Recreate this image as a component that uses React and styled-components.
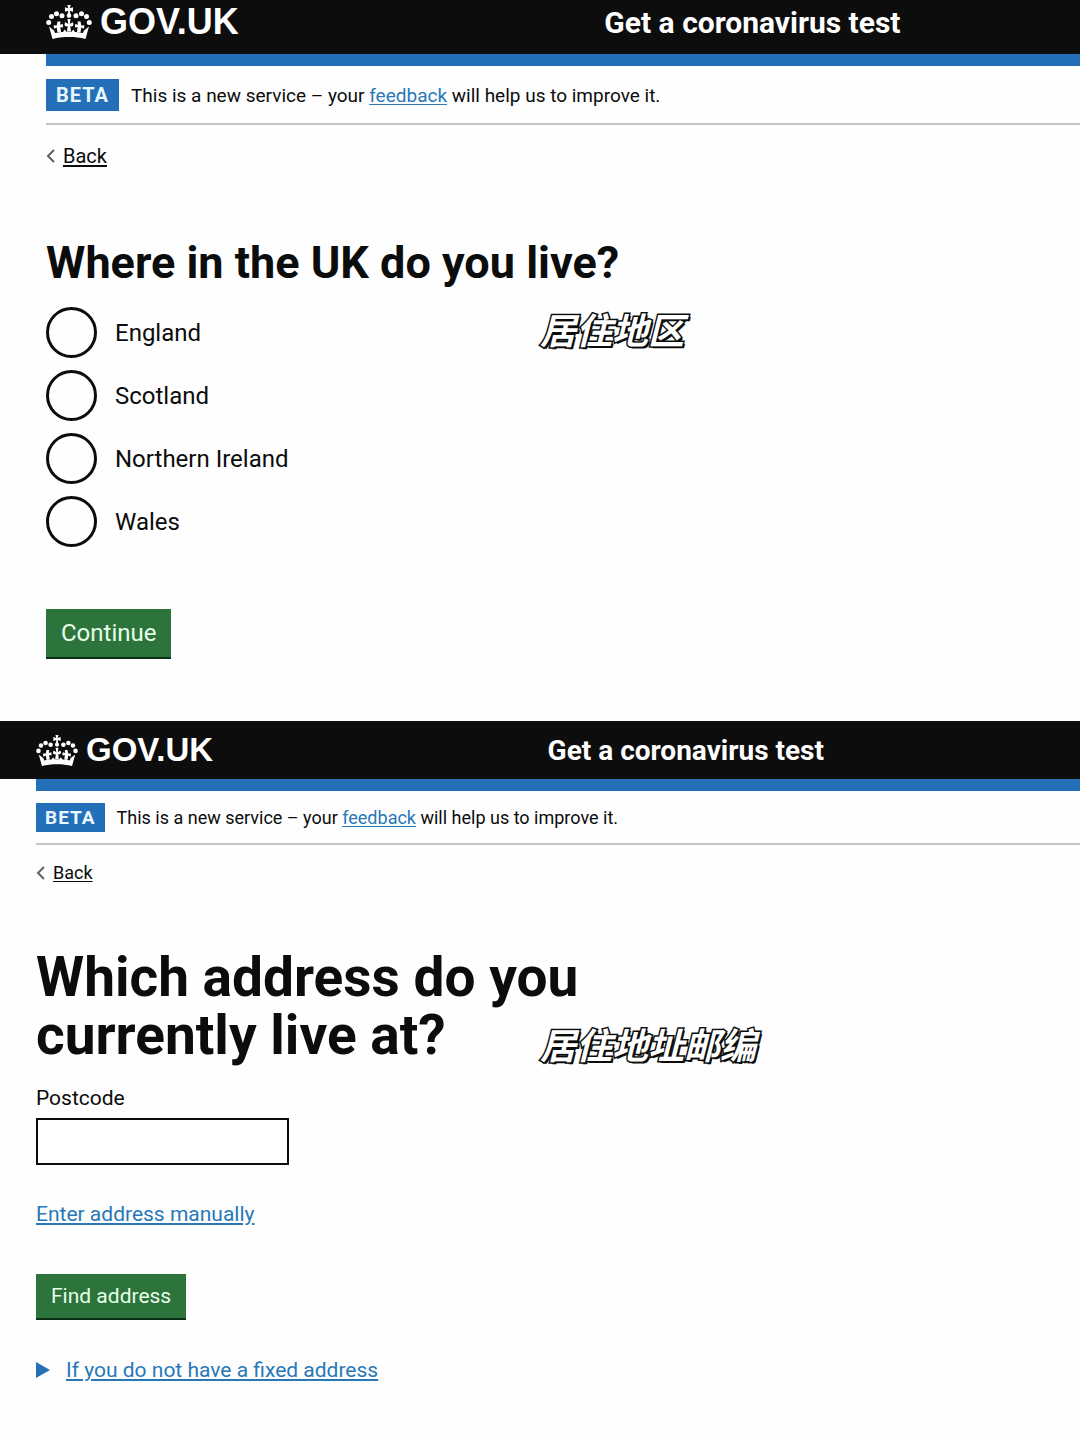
import styled, { createGlobalStyle, ThemeProvider } from "styled-components";

const regionSizes = {
  gutter: 46,
  headerHeight: 54,
  headerPad: 10,
  bar: 12,
  logo: 36,
  crown: 46,
  logoColumn: "54%",
  service: 30,
  small: 19,
  back: 20,
  body: 24,
  heading: 45,
  headingLine: 50,
  headingGap: 19,
  tag: 20,
  tagHeight: 32,
  tagPad: 10,
  bannerPad: "13px 0 12px",
  backTop: 19,
  mainTop: 70,
  buttonHeight: 50,
  buttonPad: 15,
};

const addressSizes = {
  gutter: 36,
  headerHeight: 58,
  headerPad: 0,
  bar: 12,
  logo: 33,
  crown: 42,
  logoColumn: "49%",
  service: 28,
  small: 18,
  back: 18,
  body: 21,
  heading: 55,
  headingLine: 58,
  headingGap: 21,
  tag: 19,
  tagHeight: 29,
  tagPad: 9,
  bannerPad: "12px 0 11px",
  backTop: 16,
  mainTop: 63,
  buttonHeight: 46,
  buttonPad: 15,
};

const regions = ["England", "Scotland", "Northern Ireland", "Wales"];

function Crown() {
  return (
    <CrownSvg viewBox="0 0 46 36" aria-hidden="true">
      <circle cx="2.700" cy="18.500" r="2.500" />
      <circle cx="5.500" cy="12.500" r="2.500" />
      <circle cx="10.500" cy="9.800" r="2.500" />
      <circle cx="16" cy="11.800" r="2.500" />
      <circle cx="30" cy="11.800" r="2.500" />
      <circle cx="35.500" cy="9.800" r="2.500" />
      <circle cx="40.500" cy="12.500" r="2.500" />
      <circle cx="43.300" cy="18.500" r="2.500" />
      <path d="M21.300 1h3.400l-.9 3.300 3.200-1v4.400l-3.200-1 .4 2.800a2.600 2.600 0 0 1 0 4.200h-2.400a2.600 2.600 0 0 1 0-4.200l.4-2.800-3.200 1V3.300l3.200 1z" />
      {/* centre cross and the two beside it */}
      <path d="M21.500 15h3l-.7 5 2.700-1.800c1.500 1.500 1.200 4-1 4.300l-1.200-.5.7 5.500h-4l.7-5.500-1.200.5c-2.200-.3-2.500-2.800-1-4.300l2.700 1.800z" />
      <path d="M11.500 17.500h3l-.5 3.300 2.800-.8.300 3.500-2.700-.5.600 5-3.500.5-.8-5-2.700 1.300-.3-3.500 3 .2z" />
      <path d="M34.500 17.500h-3l.5 3.300-2.800-.8-.3 3.500 2.700-.5-.6 5 3.500.5.800-5 2.700 1.300.3-3.500-3 .2z" />
      <path d="M3 22.500l5.200 4.200.8 2.300c3-.7 6-1 8-1.100l1.700-2.400 1.800 2.200h5l1.800-2.200 1.700 2.400c2 .1 5 .4 8 1.100l.8-2.300 5.200-4.200L39.500 35c-10-2.600-23-2.600-33 0z" />
    </CrownSvg>
  );
}

function SiteTop() {
  return (
    <>
      <Header>
        <LogoLink href="#">
          <Crown />
          GOV.UK
        </LogoLink>
        <ServiceLink href="#">Get a coronavirus test</ServiceLink>
      </Header>
      <Container>
        <BlueBar />
        <PhaseBanner>
          <Tag>BETA</Tag>
          <span>
            This is a new service – your <Link href="#">feedback</Link> will help us to improve it.
          </span>
        </PhaseBanner>
        <BackLink href="#">
          <Chevron viewBox="0 0 9 14" aria-hidden="true">
            <path d="M8 1L2 7l6 6" />
          </Chevron>
          <span>Back</span>
        </BackLink>
      </Container>
    </>
  );
}

export default function App() {
  return (
    <>
      <GlobalStyle />
      <ThemeProvider theme={regionSizes}>
        <Panel $bottom={62}>
          <SiteTop />
          <Main>
            <Heading id="region-heading">Where in the UK do you live?</Heading>
            <RadioGroup role="radiogroup" aria-labelledby="region-heading">
              {regions.map((name) => (
                <RadioLabel key={name}>
                  <Radio type="radio" name="region" value={name} />
                  {name}
                </RadioLabel>
              ))}
            </RadioGroup>
            <Button type="button">Continue</Button>
          </Main>
          <Note lang="zh-CN" $top={301}>居住地区</Note>
        </Panel>
      </ThemeProvider>
      <ThemeProvider theme={addressSizes}>
        <Panel $bottom={40}>
          <SiteTop />
          <Main>
            <Heading>
              Which address do you
              <br />
              currently live at?
            </Heading>
            <FieldLabel htmlFor="postcode">Postcode</FieldLabel>
            <TextInput id="postcode" type="text" />
            <ManualLink href="#">Enter address manually</ManualLink>
            <Button type="button">Find address</Button>
            <Details>
              <Summary>
                <Triangle viewBox="0 0 14 16" aria-hidden="true">
                  <path d="M0 0l14 8-14 8z" />
                </Triangle>
                <span>If you do not have a fixed address</span>
              </Summary>
            </Details>
          </Main>
          <Note lang="zh-CN" $top={295}>居住地址邮编</Note>
        </Panel>
      </ThemeProvider>
    </>
  );
}

const GlobalStyle = createGlobalStyle`
  * {
    box-sizing: border-box;
  }

  body {
    margin: 0;
    background: #fefefe;
    color: #0b0c0c;
    font-family: Roboto, "Noto Sans CJK SC", sans-serif;
  }
`;

const Panel = styled.section`
  position: relative;
  padding-bottom: ${(p) => p.$bottom}px;
`;

const Header = styled.header`
  display: flex;
  align-items: center;
  height: ${(p) => p.theme.headerHeight}px;
  padding-left: ${(p) => p.theme.gutter}px;
  padding-bottom: ${(p) => p.theme.headerPad}px;
  background: #0d0d0d;
`;

const LogoLink = styled.a`
  display: flex;
  align-items: center;
  flex: 0 0 ${(p) => p.theme.logoColumn};
  gap: 8px;
  color: #fff;
  font-family: "Liberation Sans", Arial, sans-serif;
  font-size: ${(p) => p.theme.logo}px;
  font-weight: 700;
  text-decoration: none;
`;

const CrownSvg = styled.svg`
  width: ${(p) => p.theme.crown}px;
  fill: #fff;
`;

const ServiceLink = styled.a`
  color: #fff;
  font-size: ${(p) => p.theme.service}px;
  font-weight: 700;
  text-decoration: none;
`;

const Container = styled.div`
  padding-left: ${(p) => p.theme.gutter}px;
`;

const BlueBar = styled.div`
  height: ${(p) => p.theme.bar}px;
  background: #2370b8;
`;

const PhaseBanner = styled.div`
  display: flex;
  align-items: center;
  gap: 12px;
  padding: ${(p) => p.theme.bannerPad};
  border-bottom: 2px solid #c2c4c6;
  font-size: ${(p) => p.theme.small}px;
`;

const Tag = styled.strong`
  height: ${(p) => p.theme.tagHeight}px;
  padding: 0 ${(p) => p.theme.tagPad}px;
  background: #2370b8;
  color: #e8f6ff;
  font-size: ${(p) => p.theme.tag}px;
  letter-spacing: 1px;
  line-height: ${(p) => p.theme.tagHeight}px;
`;

const Link = styled.a`
  color: #2878b8;
  text-underline-offset: 2px;
`;

const BackLink = styled.a`
  display: inline-flex;
  align-items: center;
  gap: 8px;
  margin-top: ${(p) => p.theme.backTop}px;
  color: #0b0c0c;
  font-size: ${(p) => p.theme.back}px;
  line-height: 24px;
  text-decoration: none;

  span {
    text-decoration: underline;
    text-underline-offset: 2px;
  }
`;

const Chevron = styled.svg`
  width: 9px;
  height: 14px;
  fill: none;
  stroke: #606162;
  stroke-width: 2;
`;

const Main = styled.main`
  display: flex;
  flex-direction: column;
  align-items: flex-start;
  padding: ${(p) => p.theme.mainTop}px 0 0 ${(p) => p.theme.gutter}px;
  font-size: ${(p) => p.theme.body}px;
`;

const Heading = styled.h1`
  margin: 0 0 ${(p) => p.theme.headingGap}px;
  font-size: ${(p) => p.theme.heading}px;
  line-height: ${(p) => p.theme.headingLine}px;
`;

const RadioGroup = styled.div`
  display: grid;
  gap: 12px;
  margin-bottom: 62px;
`;

const RadioLabel = styled.label`
  display: flex;
  align-items: center;
  gap: 18px;
`;

const Radio = styled.input`
  appearance: none;
  width: 51px;
  height: 51px;
  margin: 0;
  border: 3px solid #0b0c0c;
  border-radius: 50%;

  &:checked {
    box-shadow: inset 0 0 0 10px #fff;
    background: #0b0c0c;
  }
`;

const Button = styled.button`
  height: ${(p) => p.theme.buttonHeight}px;
  padding: 0 ${(p) => p.theme.buttonPad}px;
  border: 0;
  border-bottom: 2px solid #0a2d16;
  background: #2d743c;
  color: #e6ffe9;
  font: inherit;
  cursor: pointer;
`;

const FieldLabel = styled.label`
  line-height: 26px;
`;

const TextInput = styled.input`
  width: 253px;
  height: 47px;
  margin: 7px 0 36px;
  padding: 0 8px;
  border: 2px solid #0b0c0c;
  background: #fff;
  font: inherit;
`;

const ManualLink = styled(Link)`
  margin-bottom: 47px;
  line-height: 26px;
`;

const Details = styled.details`
  margin-top: 37px;
  color: #2878b8;
`;

const Summary = styled.summary`
  display: flex;
  align-items: center;
  gap: 16px;
  line-height: 26px;
  list-style: none;
  cursor: pointer;

  span {
    text-decoration: underline;
    text-underline-offset: 2px;
  }
`;

const Triangle = styled.svg`
  width: 14px;
  height: 16px;
  fill: #2370b8;
`;

const Note = styled.p`
  position: absolute;
  top: ${(p) => p.$top}px;
  left: 50%;
  margin: 0;
  color: #fff;
  font-family: "Noto Sans CJK SC", sans-serif;
  font-size: 36px;
  font-style: italic;
  font-weight: 700;
  line-height: 54px;
  -webkit-text-stroke: 3px #0b0c0c;
  paint-order: stroke fill;
  text-shadow: 2px 2px 0 #0b0c0c;
`;
